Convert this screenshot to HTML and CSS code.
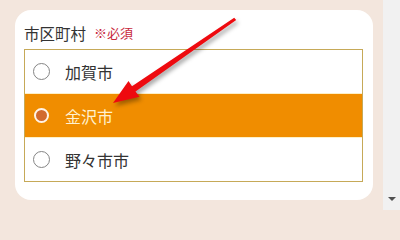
FILE: index.html
```html
<!DOCTYPE html>
<html lang="ja">
<head>
<meta charset="utf-8">
<link rel="stylesheet" href="styles.css">
</head>
<body>
<div class="page">
  <div class="content">
    <div class="card">
      <div class="label">市区町村<span class="req">※必須</span></div>
      <div class="options">
        <div class="option"><span class="radio"></span><span class="opt-text">加賀市</span></div>
        <div class="option selected"><span class="radio"></span><span class="opt-text">金沢市</span></div>
        <div class="option"><span class="radio"></span><span class="opt-text">野々市市</span></div>
      </div>
    </div>
  </div>
  <div class="scrollbar"><span class="scroll-arrow"></span></div>
</div>
<svg class="arrow" width="400" height="210" viewBox="0 0 400 210">
  <polygon points="113,103 128.5,81 132,86.3 234.2,17.8 236.2,20 135.5,91.5 139.5,96.8" fill="#ee0a0f"/>
</svg>
</body>
</html>
```
FILE: styles.css
```css
html, body {
  margin: 0;
  padding: 0;
}
body {
  width: 400px;
  height: 210px;
  overflow: hidden;
  background: #f3e6dd;
  font-family: "Noto Sans CJK JP", "Noto Sans", sans-serif;
  color: #333;
  position: relative;
}
.page {
  display: flex;
  height: 210px;
}
.content {
  width: 383px;
  box-sizing: border-box;
  padding: 10px 10px 10px 15px;
}
.card {
  background: #fff;
  border-radius: 16px;
  height: 190px;
  box-sizing: border-box;
  padding: 11px 10px 0 9px;
}
.label {
  font-size: 15.5px;
  line-height: 24px;
  height: 24px;
  margin-bottom: 4px;
  display: flex;
  align-items: center;
}
.req {
  color: #c8283c;
  font-size: 13px;
  margin-left: 8px;
}
.options {
  border: 1px solid #c6a958;
}
.option {
  height: 43px;
  display: flex;
  align-items: center;
  padding-left: 8px;
  font-size: 16px;
  background: #fff;
}
.option + .option {
  border-top: 1px solid #fdf0c8;
}
.radio {
  width: 17px;
  height: 17px;
  border: 1px solid #858585;
  border-radius: 50%;
  background: #fff;
  box-sizing: border-box;
  margin-right: 15px;
  flex: none;
}
.opt-text {
  line-height: 20px;
}
.option.selected {
  background: #f08d00;
  color: #fff1d0;
}
.option.selected .radio {
  border: 2.5px solid #fff3e6;
  background: #d26a2e;
  width: 15px;
  height: 15px;
  margin-left: 1px;
  margin-right: 16px;
}
.scrollbar {
  width: 17px;
  background: #f1f1f1;
  display: flex;
  align-items: flex-end;
  justify-content: center;
  padding-bottom: 9px;
  box-sizing: border-box;
}
.scroll-arrow {
  width: 0;
  height: 0;
  border-left: 4px solid transparent;
  border-right: 4px solid transparent;
  border-top: 4px solid #505050;
}
.arrow {
  position: absolute;
  left: 0;
  top: 0;
  pointer-events: none;
  filter: drop-shadow(2px 3px 2px rgba(0,0,0,0.35));
}
```
